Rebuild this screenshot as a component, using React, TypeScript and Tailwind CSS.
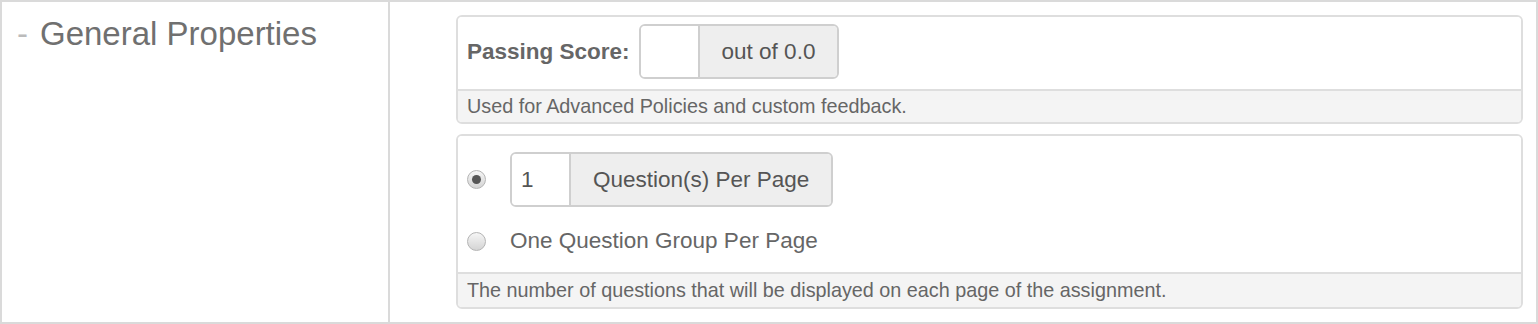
const Radio = ({ checked }: { checked?: boolean }) => (
  <span className="w-[19px] h-[19px] shrink-0 rounded-full border border-[#b4b4b4] bg-gradient-to-b from-[#f6f6f6] to-[#d4d4d4] flex items-center justify-center">
    {checked && <span className="w-[9px] h-[9px] rounded-full bg-[#555]" />}
  </span>
);

const InputGroup = ({ value, addon }: { value: string; addon: string }) => (
  <div className="flex h-[55px] border-2 border-[#cfcfcf] rounded-[6px] overflow-hidden">
    <div className="w-[59px] bg-white border-r-2 border-[#cfcfcf] pl-[9px] flex items-center text-[22.5px] text-[#555]">
      {value}
    </div>
    <div className="bg-[#eeeeee] px-[22px] flex items-center text-[22.5px] text-[#555]">
      {addon}
    </div>
  </div>
);

export default function App() {
  return (
    <div className="w-[1538px] h-[324px] border-2 border-[#dadada] flex bg-white font-['Liberation_Sans',Arial,sans-serif]">
      {/* Left heading column */}
      <div className="w-[388px] shrink-0 border-r-2 border-[#dadada] pl-[15px] pt-[13px] flex items-start">
        <span className="text-[33px] leading-[38px] text-[#bbbbbb] mr-[12px]">-</span>
        <h2 className="text-[33px] leading-[38px] text-[#707070]">General Properties</h2>
      </div>

      {/* Right content column */}
      <div className="flex-1 pl-[66px] pr-[13px] pt-[13px] flex flex-col gap-[10px]">
        {/* Passing score card */}
        <div className="border-2 border-[#dedede] rounded-[6px] overflow-hidden">
          <div className="pl-[9px] pt-[7px] pb-[10px] flex items-center bg-white">
            <span className="text-[22.5px] font-bold text-[#666] mr-[9px]">Passing Score:</span>
            <InputGroup value="" addon="out of 0.0" />
          </div>
          <div className="border-t-2 border-[#dedede] bg-[#f4f4f4] h-[33px] pl-[9px] flex items-center text-[19.8px] text-[#666]">
            Used for Advanced Policies and custom feedback.
          </div>
        </div>

        {/* Questions per page card */}
        <div className="border-2 border-[#dedede] rounded-[6px] overflow-hidden">
          <div className="pl-[9px] pt-[16px] pb-[16px] flex flex-col gap-[19px] bg-white">
            <div className="flex items-center gap-[24px]">
              <Radio checked />
              <InputGroup value="1" addon="Question(s) Per Page" />
            </div>
            <div className="flex items-center gap-[24px] h-[30px]">
              <Radio />
              <span className="text-[22.5px] text-[#666]">One Question Group Per Page</span>
            </div>
          </div>
          <div className="border-t-2 border-[#dedede] bg-[#f4f4f4] h-[35px] pl-[9px] flex items-center text-[19.8px] text-[#666]">
            The number of questions that will be displayed on each page of the assignment.
          </div>
        </div>
      </div>
    </div>
  );
}
